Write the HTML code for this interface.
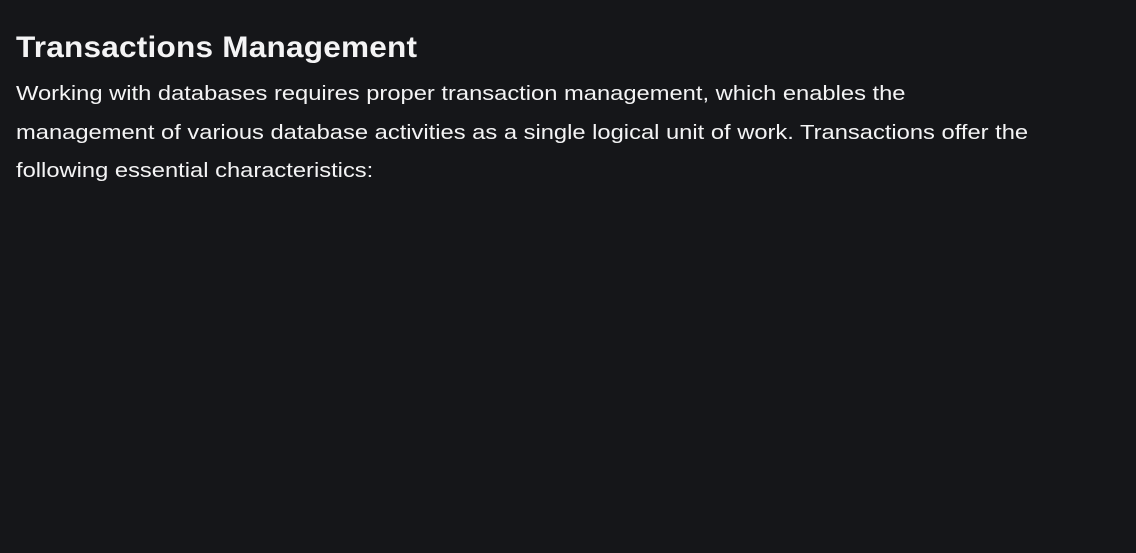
<!DOCTYPE html>
<html>
<head>
<meta charset="utf-8">
<style>
html,body{margin:0;padding:0;background:#151619;width:1136px;height:553px;overflow:hidden;}
body{font-family:"Liberation Sans",sans-serif;color:#f4f4f5;}
h1{position:absolute;left:16px;top:28px;margin:0;font-size:30px;font-weight:bold;line-height:40px;letter-spacing:0.2px;transform:scaleX(1.052);transform-origin:left top;}
p{position:absolute;left:16px;top:75px;margin:0;font-size:20.5px;line-height:38.5px;white-space:nowrap;transform:scaleX(1.157);transform-origin:left top;}
</style>
</head>
<body>
<h1>Transactions Management</h1>
<p>Working with databases requires proper transaction management, which enables the<br>management of various database activities as a single logical unit of work. Transactions offer the<br>following essential characteristics:</p>
</body>
</html>
